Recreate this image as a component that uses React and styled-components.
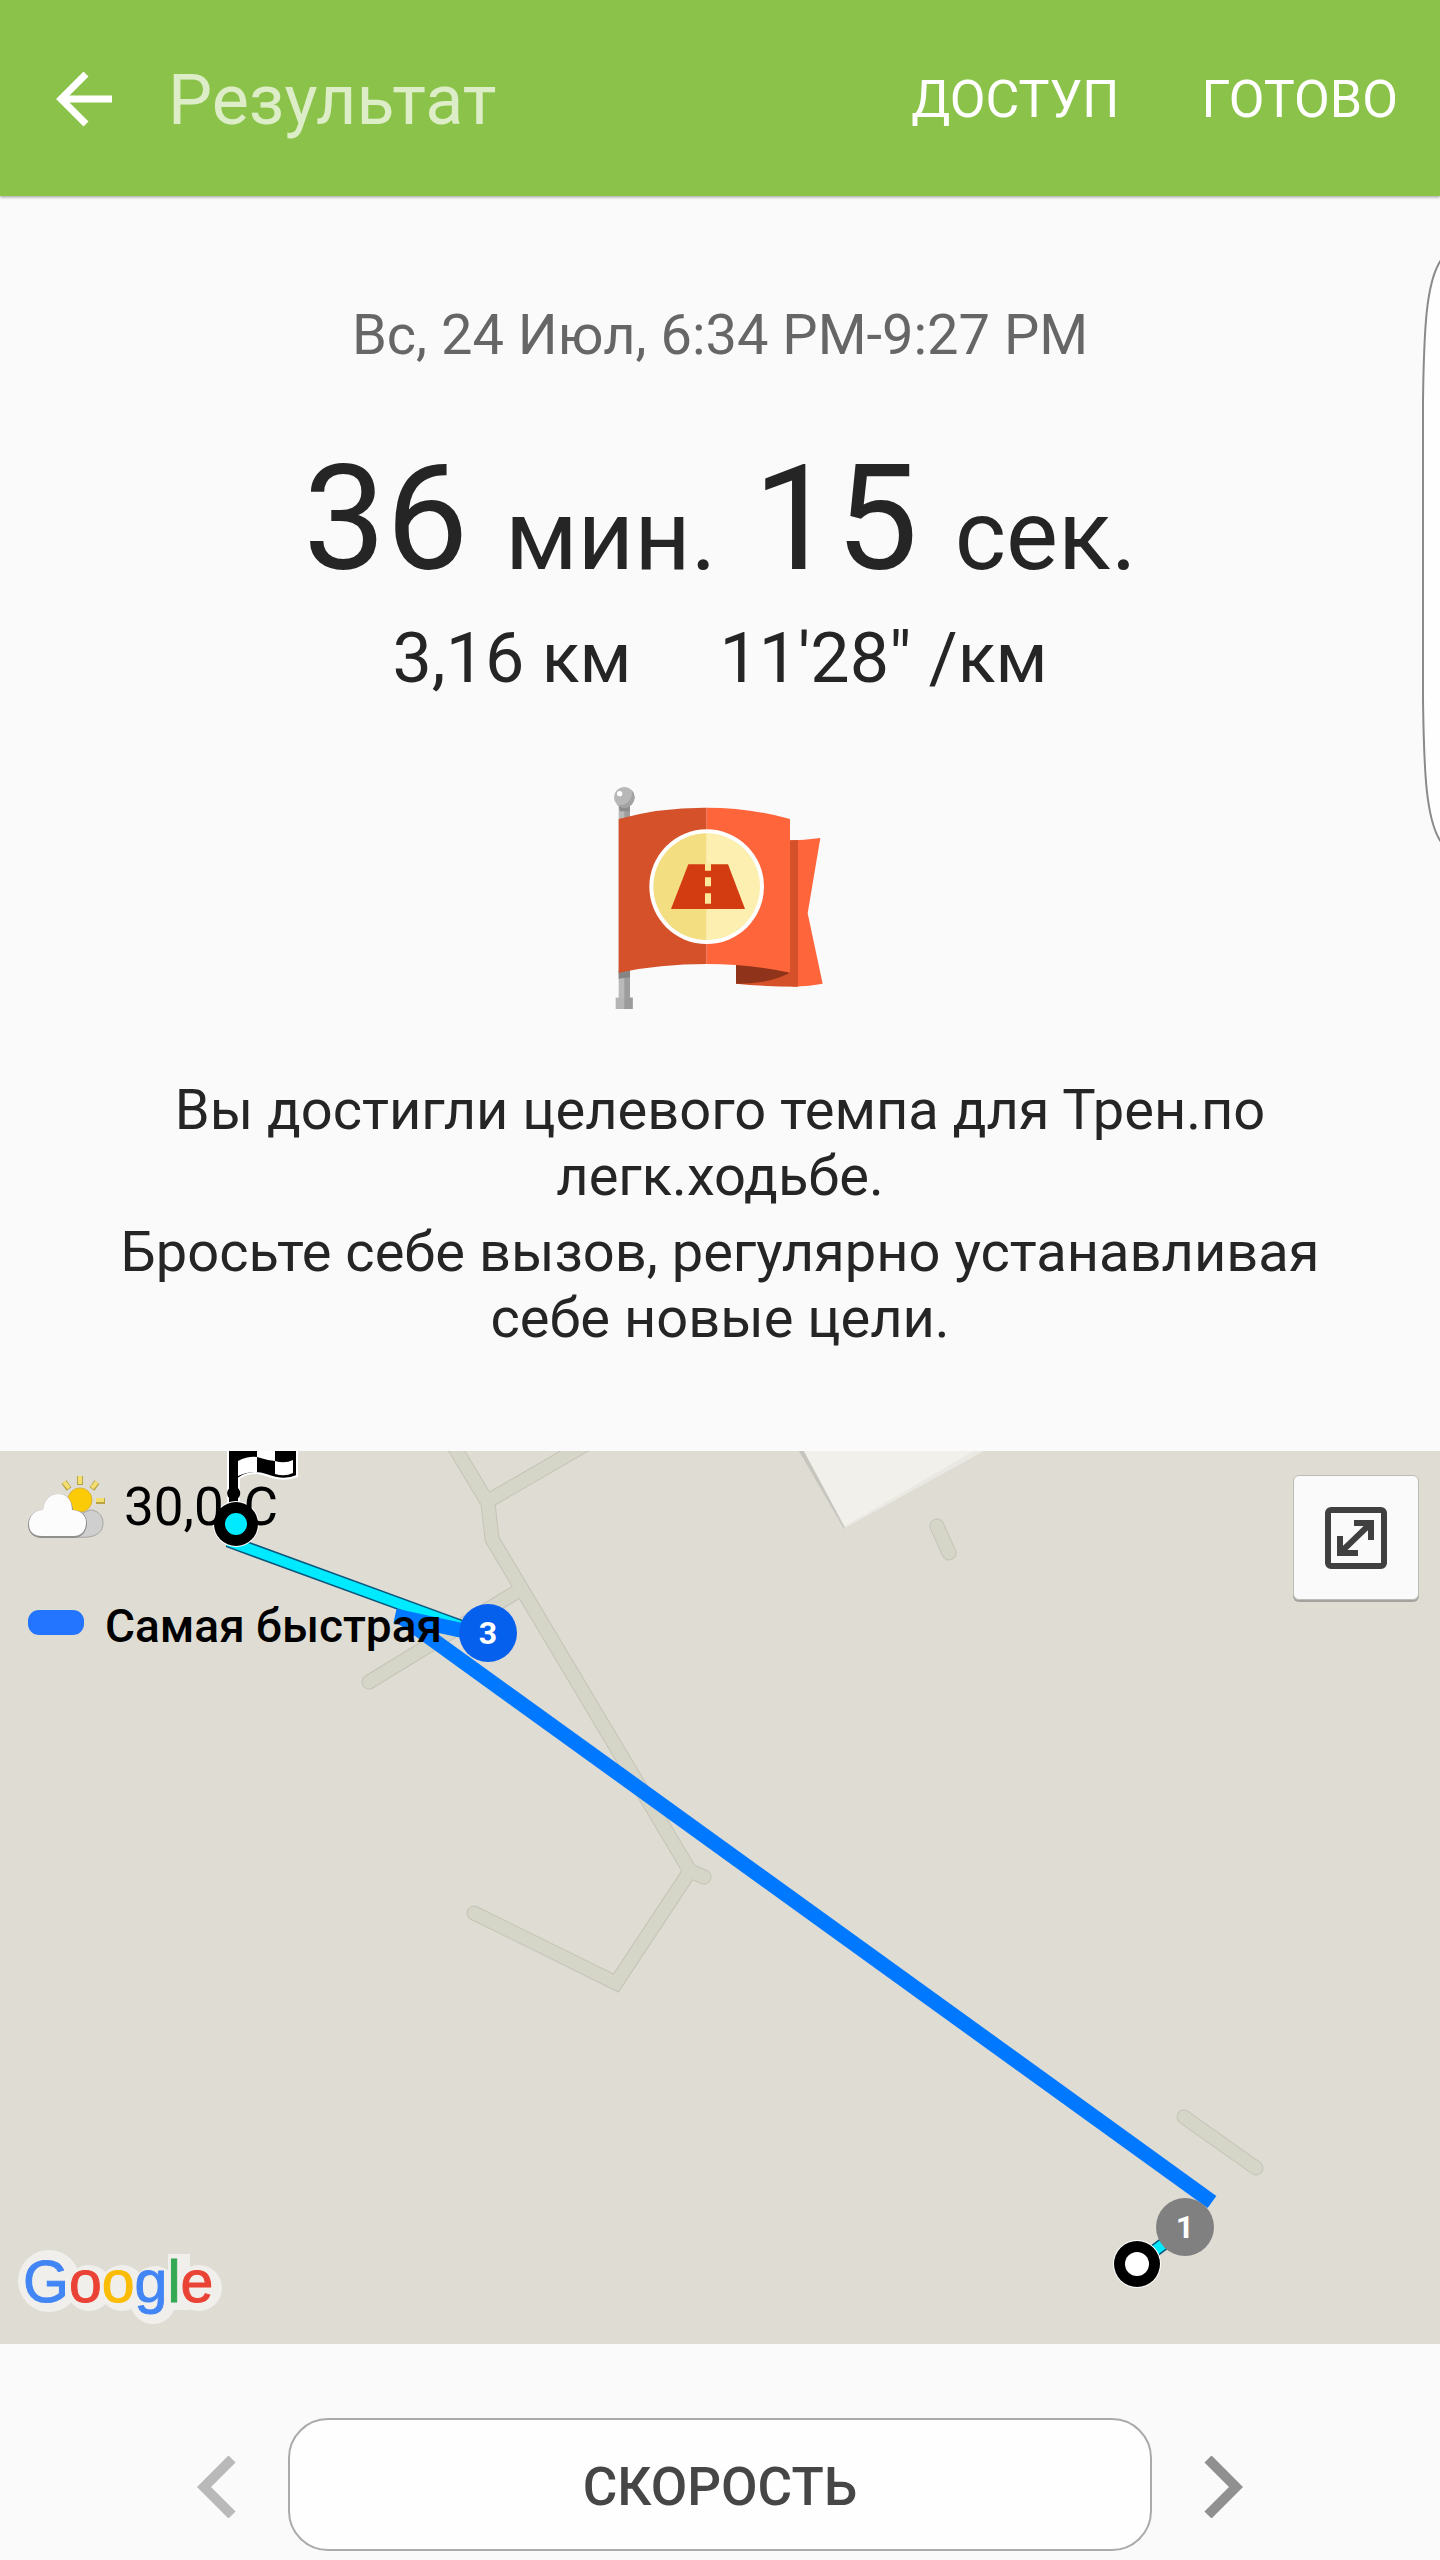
import styled, { createGlobalStyle } from "styled-components";

const GlobalStyle = createGlobalStyle`
  * {
    box-sizing: border-box;
  }
  body {
    margin: 0;
    background-color: #fafafa;
    color: #252525;
    font-family: Roboto, "Noto Sans", sans-serif;
  }
  button {
    font-family: inherit;
    padding: 0;
    border: none;
    background: none;
    cursor: pointer;
  }
`;

const Container = styled.div`
  position: relative;
  overflow: hidden;
`;

const Header = styled.header`
  display: flex;
  align-items: center;
  height: 196px;
  padding: 4px 42px 0 56px;
  background-color: #8bc34a;
  box-shadow: 0 1px 3px rgba(0, 0, 0, 0.4);
`;

const BackButton = styled.button`
  display: flex;
  margin-right: 56px;
`;

const Title = styled.h1`
  flex: 1;
  margin: 0;
  font-size: 70px;
  font-weight: 400;
  line-height: 82px;
  color: #dcedc8;
`;

const HeaderActions = styled.div`
  display: flex;
  gap: 82px;
`;

const HeaderButton = styled.button`
  font-size: 52px;
  line-height: 64px;
  color: white;
`;

// the handle of the edge panel, it lies over the page
const EdgeHandle = styled.svg`
  position: absolute;
  top: 260px;
  right: 0;
`;

const Result = styled.main`
  display: flex;
  flex-direction: column;
  align-items: center;
  padding: 106px 100px 100px;
  text-align: center;
`;

const DateText = styled.p`
  margin: 0;
  font-size: 56px;
  line-height: 66px;
  color: #666666;
`;

const Duration = styled.p`
  margin: 71px 0 0;
  font-size: 147px;
  line-height: 160px;
`;

const Unit = styled.span`
  font-size: 98px;
  line-height: 1;
`;

const Stats = styled.div`
  display: flex;
  gap: 88px;
  margin-top: 18px;
  font-size: 70px;
  line-height: 82px;
`;

const Stat = styled.span``;

const Badge = styled.svg`
  margin: 71px 0 47px;
`;

const Message = styled.p`
  margin: 0 0 ${(props) => (props.$last ? "0" : "10px")};
  font-size: 56px;
  line-height: 66px;
`;

const Map = styled.section`
  position: relative;
  aspect-ratio: 1440 / 893;
  background-color: #dfdcd4;
  overflow: hidden;
`;

const MapCanvas = styled.svg`
  position: absolute;
  inset: 0;
  width: 100%;
  height: 100%;
`;

const MapOverlay = styled.div`
  position: relative;
  display: flex;
  justify-content: space-between;
  align-items: flex-start;
  height: 100%;
  padding: 20px 21px 18px 14px;
`;

const MapInfo = styled.div`
  display: flex;
  flex-direction: column;
  height: 100%;
  color: black;
`;

const Weather = styled.div`
  display: flex;
  align-items: center;
  gap: 18px;
  padding-left: 12px;
  font-size: 53px;
  line-height: 72px;
`;

const Legend = styled.div`
  display: flex;
  align-items: center;
  gap: 21px;
  margin-top: 56px;
  padding-left: 14px;
  font-size: 46px;
  font-weight: 500;
  line-height: 54px;
`;

const LegendColor = styled.span`
  width: 56px;
  height: 25px;
  margin-bottom: 7px;
  border-radius: 11px;
  background-color: #2374ff;
`;

const Logo = styled.svg`
  margin-top: auto;
  font-family: "Liberation Sans", sans-serif;
  font-size: 59px;
`;

const ExpandButton = styled.button`
  display: flex;
  align-items: center;
  justify-content: center;
  width: 126px;
  height: 125px;
  margin-top: 4px;
  border: 1px solid #bdbdb8;
  border-radius: 6px;
  background-color: #fafafa;
  box-shadow: 0 2px 0 #a3a29d;
`;

const Switcher = styled.nav`
  display: flex;
  align-items: center;
  justify-content: center;
  gap: 52px;
  padding: 74px 0 9px;
`;

const SwitcherArrow = styled.button`
  display: flex;
  padding-top: 4px;
  color: ${(props) => (props.$dim ? "#b9b9b9" : "#909090")};
`;

const SwitcherButton = styled.button`
  width: 60%;
  height: 133px;
  padding-top: 4px;
  border: 2px solid #aaaaaa;
  border-radius: 40px;
  background-color: #fefefe;
  font-size: 53px;
  font-weight: 500;
  color: #464646;
`;

const roads = [
  "M441 -26 L488 52 L492 88 L690 420 L704 426",
  "M488 50 L626 -30",
  "M518 140 L369 231",
  "M690 420 L616 532 L474 462",
  "M937 75 L949 102",
  "M1184 666 L1256 717",
];

const BackIcon = () => (
  <svg width="56" height="56" viewBox="0 0 56 56" fill="none" stroke="white" strokeWidth="7">
    <path d="M30 2 L5 27 L30 52 M5 27 H56" />
  </svg>
);

const FlagBadge = () => (
  <Badge width="280" height="260" viewBox="0 0 840 780">
    <path d="M116 100 H150 V690 H116 Z" fill="#b9b9b9" />
    <path d="M133 100 H150 V690 H133 Z" fill="#9d9d9d" />
    <path d="M116 110 H150 V124 H120 Z" fill="#8c8c8c" />
    <path d="M116 600 H150 V622 L116 626 Z" fill="#858585" />
    <path d="M107 683 H158 V717 H107 Z" fill="#b5b5b5" />
    <path d="M133 683 H158 V717 H133 Z" fill="#9b9b9b" />
    <circle cx="133" cy="82" r="31" fill="#b8b8b8" />
    <path d="M155 60 A31 31 0 0 1 111 104 A36 36 0 0 0 155 60 Z" fill="#a2a2a2" />
    <circle cx="119" cy="71" r="8" fill="white" />
    <path d="M620 212 Q675 210 721 204 L683 430 L728 641 Q690 648 640 650 L620 640 Z" fill="#ff653b" />
    <path d="M468 580 H630 V211 L654 210 V650 Q550 650 468 641 Z" fill="#d5512a" />
    <path d="M468 580 H630 V608 Q560 644 468 641 Z" fill="#8f331a" />
    <path d="M116 147 Q240 112 380 113 V582 Q240 582 116 608 Z" fill="#d5512a" />
    <path d="M380 113 Q510 113 630 147 V608 Q510 582 380 582 Z" fill="#ff653b" />
    <circle cx="380" cy="350" r="172" fill="white" />
    <path d="M380 190 A160 160 0 0 0 380 510 Z" fill="#f3de81" />
    <path d="M380 190 A160 160 0 0 1 380 510 Z" fill="#fcefb0" />
    <path d="M325 283 H444 L495 417 H273 Z" fill="#d33b10" />
    <path d="M375 280 H393 V302 H375 Z M375 322 H393 V349 H375 Z M375 370 H393 V401 H375 Z" fill="#fae89b" />
  </Badge>
);

const WeatherIcon = () => (
  <svg width="80" height="70" viewBox="0 0 80 70">
    <g stroke="#b9a545" strokeWidth="6">
      <path d="M54 4 V13 M38 10 L43 17 M71 10 L66 17 M70 29 H79 M66 41 L71 46" />
    </g>
    <g stroke="#f5de70" strokeWidth="4">
      <path d="M54 4 V12 M38 10 L43 16 M71 10 L66 16 M70 28 H78 M66 41 L71 45" />
    </g>
    <circle cx="54" cy="28" r="12" fill="#fccb08" stroke="#d9b33a" />
    <path d="M50 65 C72 67 77 59 77 51 C77 43 71 38 64 38 L50 44 Z" fill="#cfcfcf" stroke="#a5a5a3" />
    <path
      d="M16 66 C6 66 2 59 2 53 C2 44 9 38 17 38 C18 28 24 22 32 22 C41 22 46 28 47 38 C55 38 61 43 61 51 C61 60 55 66 48 66 Z"
      fill="#8f8f8c"
    />
    <path
      d="M16 64 C6 64 3 58 3 52 C3 44 9 38 17 38 C18 28 24 22 32 22 C41 22 46 28 46 38 C54 38 60 43 60 50 C60 59 55 64 48 64 Z"
      fill="#fcfcfc"
    />
  </svg>
);

const ExpandIcon = () => (
  <svg width="62" height="62" viewBox="0 0 62 62" fill="none" stroke="#404040" strokeWidth="6">
    <rect x="3" y="3" width="56" height="56" rx="3" />
    <path d="M29 16 H46 V33 M15 29 V46 H33 M46 16 L15 46" />
  </svg>
);

const GoogleLogo = () => (
  <Logo width="210" height="76" viewBox="0 0 210 76">
    <g fill="#f0efec">
      <circle cx="35" cy="31" r="31" />
      <circle cx="75" cy="38" r="23" />
      <circle cx="108" cy="38" r="23" />
      <circle cx="141" cy="38" r="22" />
      <circle cx="139" cy="51" r="23" />
      <rect x="154" y="4" width="22" height="56" />
      <circle cx="185" cy="38" r="23" />
    </g>
    <text x="9" y="52" strokeWidth="1">
      <tspan fill="#4285f4" stroke="#4285f4">G</tspan>
      <tspan fill="#ea4335" stroke="#ea4335">o</tspan>
      <tspan fill="#fbbc05" stroke="#fbbc05">o</tspan>
      <tspan fill="#4285f4" stroke="#4285f4">g</tspan>
      <tspan fill="#34a853" stroke="#34a853">l</tspan>
      <tspan fill="#ea4335" stroke="#ea4335">e</tspan>
    </text>
  </Logo>
);

const RouteMap = () => (
  <MapCanvas viewBox="0 0 1440 893" preserveAspectRatio="xMidYMid slice">
    <g fill="none" strokeLinecap="round">
      {roads.map((d) => (
        <path key={d} d={d} stroke="#c5c4b6" strokeWidth="15" />
      ))}
      {roads.map((d) => (
        <path key={d} d={d} stroke="#d5d5c8" strokeWidth="13" />
      ))}
    </g>
    <path d="M799 0 L844 78 L850 70 L806 0 Z" fill="#c6c5be" />
    <path d="M804 0 L845 77 L984 0 Z" fill="#e9e8e2" />
    <path d="M804 0 L845 75 L974 0 Z" fill="#f1f0eb" />

    <path d="M228 90 L488 185 M1137 813 L1186 776" stroke="#08577d" strokeWidth="13" />
    <path d="M228 90 L488 185 M1137 813 L1186 776" stroke="#00eaff" strokeWidth="10" />
    <path d="M395 165 L488 185" stroke="#0078ff" strokeWidth="15" />
    <path d="M400 165 L1212 751" stroke="#0078ff" strokeWidth="15" />

    {/* finish */}
    <path d="M228 -4 H297 V25 Q284 31 266 24 Q252 19 239 27 V56 H228 Z" fill="black" stroke="white" strokeWidth="2" />
    <path d="M238 10 Q248 5 257 6 V21 Q247 21 238 25 Z" fill="white" />
    <path d="M257 0 H275 V10 Q266 9 257 6 Z" fill="white" />
    <path d="M275 10 Q285 13 293 9 V22 Q285 26 275 23 Z" fill="white" />
    <circle cx="234" cy="42" r="6" />
    <circle cx="236" cy="73" r="23" fill="white" />
    <circle cx="236" cy="73" r="22" />
    <circle cx="236" cy="73" r="11" fill="#00eaff" />

    <g fontSize="32" fontWeight="700" textAnchor="middle">
      <circle cx="488" cy="182" r="29" fill="#0660ee" />
      <text x="488" y="193" fill="white">3</text>
      <circle cx="1185" cy="776" r="29" fill="#808080" />
      <text x="1185" y="787" fill="white">1</text>
    </g>

    {/* start */}
    <circle cx="1137" cy="813" r="24" fill="white" />
    <circle cx="1137" cy="813" r="23" />
    <circle cx="1137" cy="813" r="12" fill="white" />
  </MapCanvas>
);

const App = () => {
  return (
    <Container>
      <GlobalStyle />
      <Header>
        <BackButton aria-label="Назад">
          <BackIcon />
        </BackButton>
        <Title>Результат</Title>
        <HeaderActions>
          <HeaderButton>ДОСТУП</HeaderButton>
          <HeaderButton>ГОТОВО</HeaderButton>
        </HeaderActions>
      </Header>
      <EdgeHandle width="18" height="582" viewBox="0 0 18 582">
        <path
          d="M19 0 C4 22 2 70 1 140 V440 C2 512 4 560 19 582"
          fill="#fefefe"
          stroke="#8a8a8a"
          strokeWidth="2"
        />
      </EdgeHandle>
      <Result>
        <DateText>Вс, 24 Июл, 6:34 PM-9:27 PM</DateText>
        <Duration>
          36 <Unit>мин.</Unit> 15 <Unit>сек.</Unit>
        </Duration>
        <Stats>
          <Stat>3,16 км</Stat>
          <Stat>11'28" /км</Stat>
        </Stats>
        <FlagBadge />
        <Message>Вы достигли целевого темпа для Трен.по легк.ходьбе.</Message>
        <Message $last>
          Бросьте себе вызов, регулярно устанавливая себе новые цели.
        </Message>
      </Result>
      <Map>
        <RouteMap />
        <MapOverlay>
          <MapInfo>
            <Weather>
              <WeatherIcon />
              30,0°C
            </Weather>
            <Legend>
              <LegendColor />
              Самая быстрая
            </Legend>
            <GoogleLogo />
          </MapInfo>
          <ExpandButton aria-label="Развернуть карту">
            <ExpandIcon />
          </ExpandButton>
        </MapOverlay>
      </Map>
      <Switcher>
        <SwitcherArrow $dim aria-label="Предыдущий">
          <svg width="39" height="62" viewBox="0 0 39 62" fill="none" stroke="currentColor" strokeWidth="10">
            <path d="M35 3 L7 31 L35 59" />
          </svg>
        </SwitcherArrow>
        <SwitcherButton>СКОРОСТЬ</SwitcherButton>
        <SwitcherArrow aria-label="Следующий">
          <svg width="39" height="62" viewBox="0 0 39 62" fill="none" stroke="currentColor" strokeWidth="10">
            <path d="M4 3 L32 31 L4 59" />
          </svg>
        </SwitcherArrow>
      </Switcher>
    </Container>
  );
};

export default App;
